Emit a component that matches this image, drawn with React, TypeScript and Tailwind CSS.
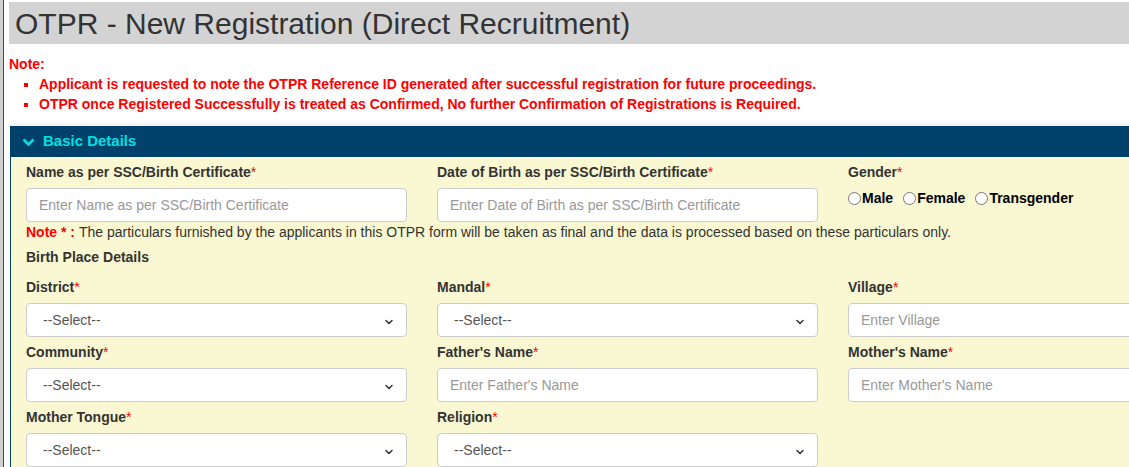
import { ChevronDown } from 'lucide-react';

const font = { fontFamily: '"Liberation Sans", Arial, sans-serif' };

function Label({ text }: { text: string }) {
  return (
    <label className="block text-[14px] font-bold text-[#333] leading-[20px] mb-[6px]">
      {text}
      <span className="text-[#f00] font-normal">*</span>
    </label>
  );
}

function TextBox({ placeholder }: { placeholder: string }) {
  return (
    <input
      type="text"
      placeholder={placeholder}
      className="block w-full h-[34px] px-3 bg-white border border-[#ccc] rounded-[4px] text-[14px] text-[#555] placeholder:text-[#999] outline-none"
    />
  );
}

function SelectBox() {
  return (
    <div className="relative h-[34px] w-full bg-white border border-[#ccc] rounded-[4px] flex items-center pl-4 text-[14px] text-[#555]">
      --Select--
      <ChevronDown className="absolute right-[11px] top-[12px] w-[12px] h-[12px] text-[#333]" strokeWidth={3} />
    </div>
  );
}

function Field({ label, children }: { label: string; children: React.ReactNode }) {
  return (
    <div className="w-[411px] shrink-0 px-[15px]">
      <Label text={label} />
      {children}
    </div>
  );
}

function Radio({ text }: { text: string }) {
  return (
    <label className="flex items-center mr-[10px]">
      <input type="radio" name="gender" className="w-[13px] h-[13px] m-0 mr-px" />
      {text}
    </label>
  );
}

export default function App() {
  return (
    <div className="w-[1129px] h-[467px] overflow-hidden bg-white flex" style={font}>
      <div className="w-[3px] bg-[#cfcfcf] shrink-0" />
      <div className="w-px bg-[#2f4f6f] shrink-0" />
      <div className="flex-1 min-w-0 pl-[5px]">
        <div className="mt-[2px] h-[42px] bg-[#d3d3d3] pl-[6px] flex items-center text-[30px] text-[#333] whitespace-nowrap">
          OTPR - New Registration (Direct Recruitment)
        </div>

        <div className="mt-[10px] text-[14px] font-bold text-[#f00] leading-[20px]">Note:</div>
        <ul className="text-[14px] font-bold text-[#f00] leading-[20px] pl-[30px] list-[square] whitespace-nowrap">
          <li>Applicant is requested to note the OTPR Reference ID generated after successful registration for future proceedings.</li>
          <li>OTPR once Registered Successfully is treated as Confirmed, No further Confirmation of Registrations is Required.</li>
        </ul>

        <div className="mt-[12px] ml-px w-[1300px] shadow-[0_-2px_5px_rgba(0,0,0,0.08)] border-l border-[#00416b]">
          <div className="h-[31px] bg-[#00416b] flex items-center pl-[11px] gap-[8px]">
            <svg width="13" height="8" viewBox="0 0 13 8" className="text-[#00e0e0]">
              <polyline points="1.5,1.5 6.5,6.5 11.5,1.5" fill="none" stroke="currentColor" strokeWidth="2.6" />
            </svg>
            <span className="text-[15px] font-bold text-[#00e0e0]">Basic Details</span>
          </div>
          <div className="bg-[#faf8d2] pt-[5px] pb-4">
            <div className="flex">
              <Field label="Name as per SSC/Birth Certificate">
                <TextBox placeholder="Enter Name as per SSC/Birth Certificate" />
              </Field>
              <Field label="Date of Birth as per SSC/Birth Certificate">
                <TextBox placeholder="Enter Date of Birth as per SSC/Birth Certificate" />
              </Field>
              <div className="w-[411px] shrink-0 px-[15px]">
                <Label text="Gender" />
                <div className="flex items-center mt-[2px] leading-[20px] text-[14px] font-bold text-black">
                  <Radio text="Male" />
                  <Radio text="Female" />
                  <Radio text="Transgender" />
                </div>
              </div>
            </div>

            <div className="px-[15px] text-[14px] leading-[20px] text-[#333] whitespace-nowrap">
              <span className="text-[#f00] font-bold">Note * : </span>
              The particulars furnished by the applicants in this OTPR form will be taken as final and the data is processed based on these particulars only.
            </div>
            <div className="px-[15px] mt-[5px] text-[14px] font-bold leading-[20px] text-[#333]">
              Birth Place Details
            </div>

            <div className="flex mt-[10px]">
              <Field label="District">
                <SelectBox />
              </Field>
              <Field label="Mandal">
                <SelectBox />
              </Field>
              <Field label="Village">
                <TextBox placeholder="Enter Village" />
              </Field>
            </div>
            <div className="flex mt-[5px]">
              <Field label="Community">
                <SelectBox />
              </Field>
              <Field label="Father's Name">
                <TextBox placeholder="Enter Father's Name" />
              </Field>
              <Field label="Mother's Name">
                <TextBox placeholder="Enter Mother's Name" />
              </Field>
            </div>
            <div className="flex mt-[5px]">
              <Field label="Mother Tongue">
                <SelectBox />
              </Field>
              <Field label="Religion">
                <SelectBox />
              </Field>
            </div>
          </div>
        </div>
      </div>
    </div>
  );
}
